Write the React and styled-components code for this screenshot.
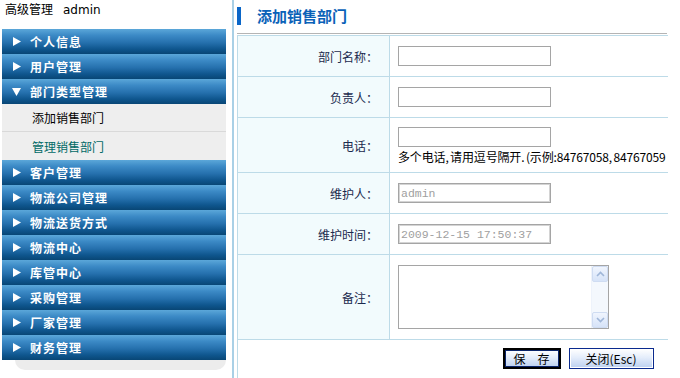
import React from 'react';
import styled, { createGlobalStyle } from 'styled-components';

const GlobalStyle = createGlobalStyle`
  html, body {
    margin: 0;
    padding: 0;
    background: #fff;
  }
  body {
    font-family: "Noto Sans CJK SC", "DejaVu Sans", sans-serif;
    font-size: 12px;
    color: #000;
  }
`;

const menuBefore = [
  { title: '个人信息' },
  { title: '用户管理' },
  { title: '部门类型管理', open: true, items: ['添加销售部门', '管理销售部门'], active: 1 },
];
const menuAfter = ['客户管理', '物流公司管理', '物流送货方式', '物流中心', '库管中心', '采购管理', '厂家管理', '财务管理'];

const Arrow = ({ open }) =>
  open ? (
    <svg width="9" height="8" viewBox="0 0 9 8"><path d="M0 0 H9 L4.5 8 Z" fill="#fff" /></svg>
  ) : (
    <svg width="8" height="9" viewBox="0 0 8 9"><path d="M0 0 L8 4.5 L0 9 Z" fill="#fff" /></svg>
  );

const Chevron = ({ up }) => (
  <svg width="9" height="6" viewBox="0 0 9 6">
    <path d={up ? 'M1 5 L4.5 1.5 L8 5' : 'M1 1 L4.5 4.5 L8 1'} fill="none" stroke="#9fb6d8" strokeWidth="1.6" />
  </svg>
);

const App = () => {
  return (
    <>
      <GlobalStyle />
      <Page>
        <Sidebar>
          <UserBar>
            高级管理<UserName>admin</UserName>
          </UserBar>
          {menuBefore.map((m) => (
            <React.Fragment key={m.title}>
              <MenuHeader>
                <ArrowBox><Arrow open={m.open} /></ArrowBox>
                {m.title}
              </MenuHeader>
              {m.items && m.items.map((it, i) => (
                <SubItem key={it} $active={i === m.active} $last={i === m.items.length - 1}>{it}</SubItem>
              ))}
            </React.Fragment>
          ))}
          {menuAfter.map((t) => (
            <MenuHeader key={t}>
              <ArrowBox><Arrow /></ArrowBox>
              {t}
            </MenuHeader>
          ))}
          <SideFooter />
        </Sidebar>

        <Main>
          <Heading>
            <HeadingBar />
            <HeadingTitle>添加销售部门</HeadingTitle>
          </Heading>
          <FormBox>
            <FormTable>
              <colgroup>
                <col style={{ width: 152 }} />
                <col style={{ width: 278 }} />
              </colgroup>
              <tbody>
                <tr>
                  <Label>部门名称：</Label>
                  <Value><TextInput type="text" /></Value>
                </tr>
                <tr>
                  <Label>负责人：</Label>
                  <Value><TextInput type="text" /></Value>
                </tr>
                <tr>
                  <Label $h={54}>电话：</Label>
                  <Value>
                    <TextInput type="text" />
                    <Hint>多个电话, 请用逗号隔开. (示例:84767058, 84767059</Hint>
                  </Value>
                </tr>
                <tr>
                  <Label>维护人：</Label>
                  <Value><TextInput type="text" disabled defaultValue="admin" /></Value>
                </tr>
                <tr>
                  <Label>维护时间：</Label>
                  <Value><TextInput type="text" disabled defaultValue="2009-12-15 17:50:37" /></Value>
                </tr>
                <tr>
                  <Label $h={84}>备注：</Label>
                  <Value>
                    <MemoBox>
                      <Memo />
                      <ScrollBar>
                        <ScrollButton><Chevron up /></ScrollButton>
                        <ScrollButton><Chevron /></ScrollButton>
                      </ScrollBar>
                    </MemoBox>
                  </Value>
                </tr>
                <tr>
                  <ButtonCell colSpan={2}>
                    <Button $primary>保　存</Button>
                    <Button>关闭(Esc)</Button>
                  </ButtonCell>
                </tr>
              </tbody>
            </FormTable>
          </FormBox>
        </Main>
      </Page>
    </>
  );
};

const Page = styled.div`
  display: flex;
  height: 100vh;
  overflow: hidden;
`;

const Sidebar = styled.div`
  width: 224px;
  margin-left: 2px;
  display: flex;
  flex-direction: column;
  flex-shrink: 0;
`;

const UserBar = styled.div`
  height: 29px;
  box-sizing: border-box;
  padding: 1px 3px;
  line-height: 16px;
  font-size: 12px;
  color: #000;
`;

const UserName = styled.span`
  margin-left: 10px;
  font-family: "DejaVu Sans", sans-serif;
`;

const MenuHeader = styled.div`
  height: 25px;
  display: flex;
  align-items: center;
  padding-left: 10px;
  background: linear-gradient(to bottom, #5ba7d9 0%, #3c8ac6 25%, #2570ad 55%, #0f568e 80%, #084675 100%);
  color: #fff;
  font-weight: bold;
  font-size: 12px;
  letter-spacing: 1px;
`;

const ArrowBox = styled.span`
  width: 9px;
  height: 9px;
  display: flex;
  align-items: center;
  justify-content: center;
  margin-right: 9px;
`;

const SubItem = styled.div`
  height: 28px;
  box-sizing: border-box;
  display: flex;
  align-items: center;
  padding-left: 30px;
  background: #eeeeee;
  border-bottom: ${(p) => (p.$last ? 'none' : '1px solid #d9d9d9')};
  color: ${(p) => (p.$active ? '#006a66' : '#000')};
  font-size: 12px;
`;

const SideFooter = styled.div`
  height: 10px;
  margin-left: 13px;
  background: #ececec;
  border-radius: 0 0 10px 10px;
`;

const Main = styled.div`
  margin-left: 6px;
  border-left: 2px solid #a9d0e6;
  padding-left: 3px;
  flex: 1;
  min-width: 0;
`;

const Heading = styled.div`
  height: 33px;
  box-sizing: border-box;
  padding-top: 7px;
  display: flex;
  align-items: flex-start;
`;

const HeadingBar = styled.span`
  width: 4px;
  height: 18px;
  background: #0a66c8;
`;

const HeadingTitle = styled.span`
  margin-left: 16px;
  line-height: 18px;
  font-size: 15px;
  font-weight: bold;
  color: #0a62b8;
`;

const FormBox = styled.div`
  width: 430px;
  border-top: 1px solid #b4b4b4;
  padding-top: 1px;
`;

const FormTable = styled.table`
  width: 430px;
  table-layout: fixed;
  border-collapse: collapse;
  border-left: 1px solid #bddbe8;
  border-top: 1px solid #bddbe8;
`;

const Label = styled.td`
  height: ${(p) => p.$h || 40}px;
  padding: 0 11px 0 0;
  text-align: right;
  vertical-align: middle;
  background: #f2fbfd;
  border-right: 1px solid #bddbe8;
  border-bottom: 1px solid #bddbe8;
  color: #1b2a4e;
  font-size: 12px;
`;

const Value = styled.td`
  padding: 0 0 0 8px;
  vertical-align: middle;
  border-bottom: 1px solid #bddbe8;
  overflow: hidden;
`;

const TextInput = styled.input`
  display: block;
  width: 153px;
  height: 20px;
  box-sizing: border-box;
  margin: 0;
  padding: 0 2px;
  border: 1px solid #a5a5a5;
  background: #fff;
  outline: none;
  font-family: "Liberation Mono", monospace;
  font-size: 11.5px;
  color: #a0a0a0;
  box-shadow: ${(p) => (p.disabled ? 'inset 0 0 0 1px #d4d4d4' : 'none')};
`;

const Hint = styled.div`
  margin-top: 3px;
  line-height: 14px;
  white-space: nowrap;
  font-size: 12px;
  letter-spacing: -0.15px;
  word-spacing: -1px;
  color: #000;
`;

const MemoBox = styled.div`
  width: 211px;
  height: 64px;
  box-sizing: border-box;
  border: 1px solid #a5a5a5;
  display: flex;
  background: #fff;
`;

const Memo = styled.textarea`
  flex: 1;
  border: none;
  margin: 0;
  padding: 2px;
  resize: none;
  outline: none;
  overflow: hidden;
`;

const ScrollBar = styled.div`
  width: 16px;
  display: flex;
  flex-direction: column;
  justify-content: space-between;
  background: #f4f8fd;
  border-left: 1px solid #eef3fb;
`;

const ScrollButton = styled.div`
  height: 16px;
  box-sizing: border-box;
  display: flex;
  align-items: center;
  justify-content: center;
  border: 1px solid #cfdcf2;
  border-radius: 2px;
  background: linear-gradient(to bottom, #f0f5fe, #d6e3f8);
`;

const ButtonCell = styled.td`
  padding: 8px 14px 0 0;
  text-align: right;
  vertical-align: top;
  height: 38px;
  box-sizing: border-box;
`;

const Button = styled.button`
  height: 21px;
  margin: 0 0 0 8px;
  padding: 0;
  width: ${(p) => (p.$primary ? 58 : 85)}px;
  box-sizing: border-box;
  border: ${(p) => (p.$primary ? '2px solid #000' : '1px solid #0a2a8e')};
  box-shadow: inset 0 0 0 1px ${(p) => (p.$primary ? '#0a246a' : '#fff')};
  background: linear-gradient(to bottom, #ffffff 0%, #e4edfb 45%, #bcd0f0 100%);
  font-family: "Noto Sans CJK SC", sans-serif;
  font-size: 12px;
  line-height: 17px;
  color: #000;
  cursor: pointer;
`;

export default App;
